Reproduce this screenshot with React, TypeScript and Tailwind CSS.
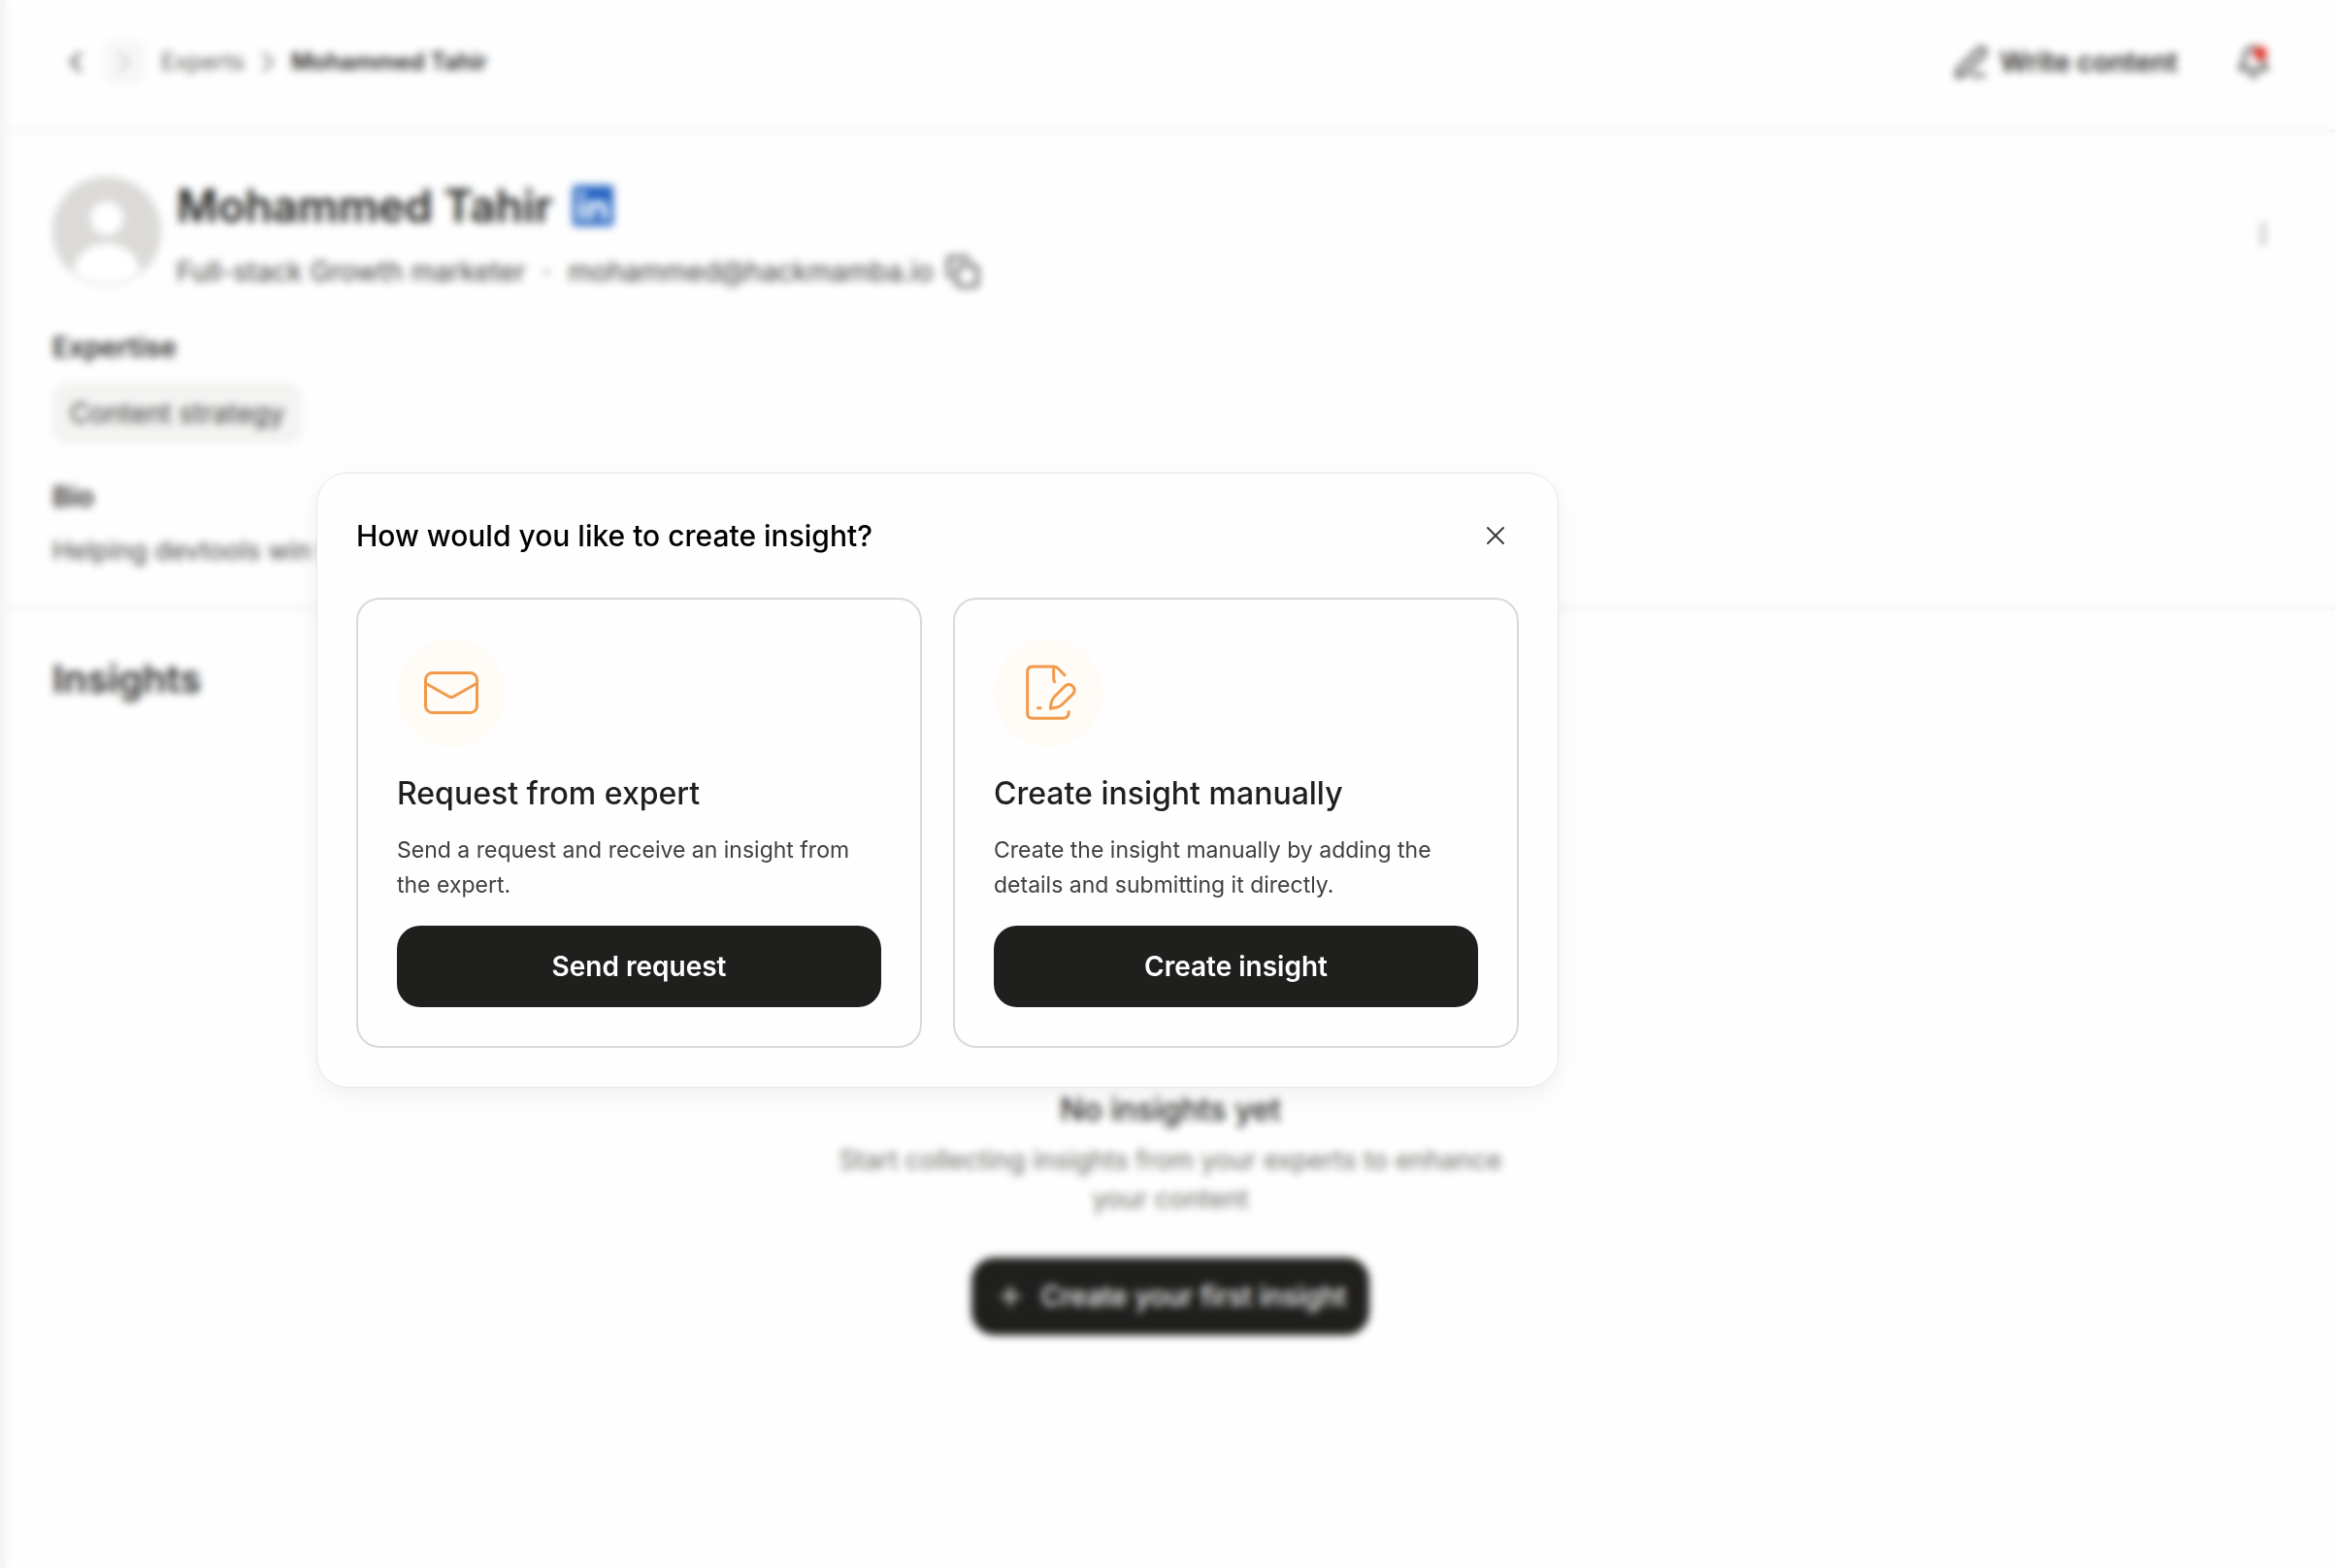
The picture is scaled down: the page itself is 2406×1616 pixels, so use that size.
import React from "react";
import { ChevronLeft, ChevronRight, PenLine, Bell, Plus, Copy, EllipsisVertical, X } from "lucide-react";

function Envelope() {
  return (
    <svg viewBox="0 0 56 44" className="h-11 w-14" fill="none" stroke="#f19a4b" strokeWidth="3" strokeLinecap="round">
      <rect x="1.5" y="1.5" width="53" height="41" rx="7" />
      <path d="M2 12.5 L25 25.5 Q28 27.5 31 25.5 L54 12.5" />
    </svg>
  );
}

function NotePencil() {
  return (
    <svg viewBox="0 0 56 56" className="size-14 overflow-visible" fill="none" stroke="#f19a4b" strokeWidth="3" strokeLinecap="round" strokeLinejoin="round">
      <path d="M45 9.7 L37.500 2.200 Q36 1 33.700 1 H11.700 Q6.700 1 6.700 6 V49.300 Q6.700 54.300 11.700 54.300 H43 Q49.300 54.300 49.300 47.500" />
      <path d="M33.700 1 V13 Q33.700 15.500 34.700 16.700" />
      <path d="M17.500 43.700 H20" />
      <path d="M30.300 44.300 L31.300 38 Q32 34.500 34.500 32 L45.500 21 Q49.500 17.700 53.200 21 Q57 25 53.500 29.300 L42.500 40 Q40 42.300 37 43 Z" />
    </svg>
  );
}

function LinkedIn() {
  return (
    <svg viewBox="0 0 44 44" className="size-11" role="img" aria-label="LinkedIn">
      <rect x="1" y="1" width="42" height="42" rx="3" fill="#2867c4" />
      <rect x="7" y="17" width="6" height="20" fill="#fff" />
      <circle cx="10" cy="10.500" r="3.500" fill="#fff" />
      <path d="M17 17 h6 v3 c3-5 14-5 14 6 v11 h-6 V27 c0-6-8-6-8 0 v10 h-6z" fill="#fff" />
    </svg>
  );
}

function Avatar() {
  return (
    <svg viewBox="0 0 112 112" className="size-28 shrink-0">
      <clipPath id="avatar-clip"><circle cx="56" cy="56" r="56" /></clipPath>
      <g clipPath="url(#avatar-clip)">
        <rect width="112" height="112" fill="#dbdad8" />
        <circle cx="56" cy="43" r="17" fill="#fff" />
        <ellipse cx="56" cy="99" rx="34" ry="30" fill="#fff" />
      </g>
      <circle cx="56" cy="56" r="55" fill="none" stroke="#dbdad8" strokeWidth="2" />
    </svg>
  );
}

function Page() {
  return (
    <div className="flex min-h-screen">
      <aside className="w-1.5 shrink-0 bg-[#f5f4f2]" />
      <div className="flex min-w-0 flex-1 flex-col">
        <header className="flex h-34 items-center justify-between border-b-2 border-[#eaeae8] pr-14.5 pb-1.5 pl-12">
          <nav className="flex items-center text-2xl" aria-label="Breadcrumb">
            <button aria-label="Back" className="flex h-12 w-12 items-center justify-center text-[#3a3a38]"><ChevronLeft className="size-9" strokeWidth={1.75} /></button>
            <button aria-label="Forward" className="ml-1 flex h-12 w-11 items-center justify-center rounded-xl bg-[#f7f7f7] text-[#c4c4c2]"><ChevronRight className="size-9" strokeWidth={1.75} /></button>
            <a href="#experts" className="ml-4 text-[#5b5b58]">Experts</a>
            <ChevronRight className="mx-1.5 size-9 text-[#7a7a78]" strokeWidth={1.75} />
            <span className="font-semibold text-[#1f1f1d]">Mohammed Tahir</span>
          </nav>
          <div className="flex items-center gap-13">
            <button className="flex items-center gap-3 text-[28px] font-semibold text-[#2b2b29]"><PenLine className="size-9" />Write content</button>
            <button aria-label="Notifications" className="relative p-2 text-[#2b2b29]">
              <Bell className="size-9" />
              <span className="absolute top-2.5 right-3 size-3.5 rounded-full bg-[#e02a22]" />
            </button>
          </div>
        </header>
        <section className="border-b-2 border-[#eaeae8] px-12 pt-11.5 pb-9.5">
          <div className="flex items-start gap-4">
            <Avatar />
            <div className="flex-1 pt-0.5">
              <div className="flex items-center gap-5">
                <h1 className="text-[46px] leading-14 font-semibold text-[#1f1f1d]">Mohammed Tahir</h1>
                <a href="#linkedin"><LinkedIn /></a>
              </div>
              <div className="mt-5 flex items-center text-[28px] leading-10 text-[#3f3f3c]">
                <span>Full-stack Growth marketer</span>
                <span className="mx-5 size-1 rounded-full bg-[#555552]" />
                <span>mohammed@hackmamba.io</span>
                <button aria-label="Copy email" className="ml-3"><Copy className="size-9" /></button>
              </div>
            </div>
            <button aria-label="More" className="mr-3 self-center text-[#777774]"><EllipsisVertical className="size-7" /></button>
          </div>
          <h2 className="mt-9.5 text-[28px] leading-10 font-semibold text-[#2b2b29]">Expertise</h2>
          <p className="mt-4 w-fit rounded-2xl bg-[#f3f3f2] px-4.5 py-3 text-[28px] leading-10 text-[#3a3a38]">Content strategy</p>
          <h2 className="mt-8.5 text-[28px] leading-10 font-semibold text-[#2b2b29]">Bio</h2>
          <p className="mt-4 text-[27px] leading-10 text-[#444442]">Helping devtools win t</p>
        </section>
        <section className="px-12 pt-12">
          <h2 className="text-[40px] leading-12 font-semibold text-[#2b2b29]">Insights</h2>
          <div className="mx-auto mt-100 flex w-180 flex-col items-center text-center">
            <h3 className="text-[32px] leading-10 font-medium text-[#1f1f1d]">No insights yet</h3>
            <p className="mt-3 text-[27px] leading-10 text-[#6b6b66]">Start collecting insights from your experts to enhance your content</p>
            <button className="mt-10 flex h-20 items-center gap-4 rounded-3xl bg-[#1f1f1d] px-6 text-[28px] font-medium text-white"><Plus className="size-8" />Create your first insight</button>
          </div>
        </section>
      </div>
    </div>
  );
}

type OptionProps = { icon: React.ReactNode; title: string; text: string; action: string };

function Option({ icon, title, text, action }: OptionProps) {
  return (
    <article className="rounded-3xl border-2 border-[#d9d9d9] p-10">
      <div className="flex size-28 items-center justify-center rounded-full bg-[#fffbf6]">{icon}</div>
      <h3 className="mt-7 text-[32px] leading-10 font-medium text-[#1f1f1d]">{title}</h3>
      <p className="mt-5 text-[23px] leading-9 text-[#40403e]">{text}</p>
      <button className="mt-6 h-21 w-full rounded-3xl bg-[#1f1f1d] text-[28px] font-semibold text-white">{action}</button>
    </article>
  );
}

export default function App() {
  return (
    <div className="relative bg-[#fefefe] font-['Inter',sans-serif]">
      <Page />
      <div className="fixed inset-0 flex items-center justify-center pr-[474px] pb-2 backdrop-blur-xs">
        <div role="dialog" aria-modal="true" aria-labelledby="dialog-title" className="w-full max-w-7xl rounded-4xl border border-[#e6e6e6] bg-[#fefefe] p-10 shadow-[0_8px_24px_rgba(0,0,0,0.06)]">
          <div className="flex h-12 items-center justify-between">
            <h2 id="dialog-title" className="text-3xl font-medium text-black">How would you like to create insight?</h2>
            <button aria-label="Close" className="p-2 text-[#3a3a38]"><X className="size-8" strokeWidth={1.5} /></button>
          </div>
          <div className="mt-10 grid grid-cols-2 gap-8">
            <Option icon={<Envelope />} title="Request from expert" text="Send a request and receive an insight from the expert." action="Send request" />
            <Option icon={<NotePencil />} title="Create insight manually" text="Create the insight manually by adding the details and submitting it directly." action="Create insight" />
          </div>
        </div>
      </div>
    </div>
  );
}
